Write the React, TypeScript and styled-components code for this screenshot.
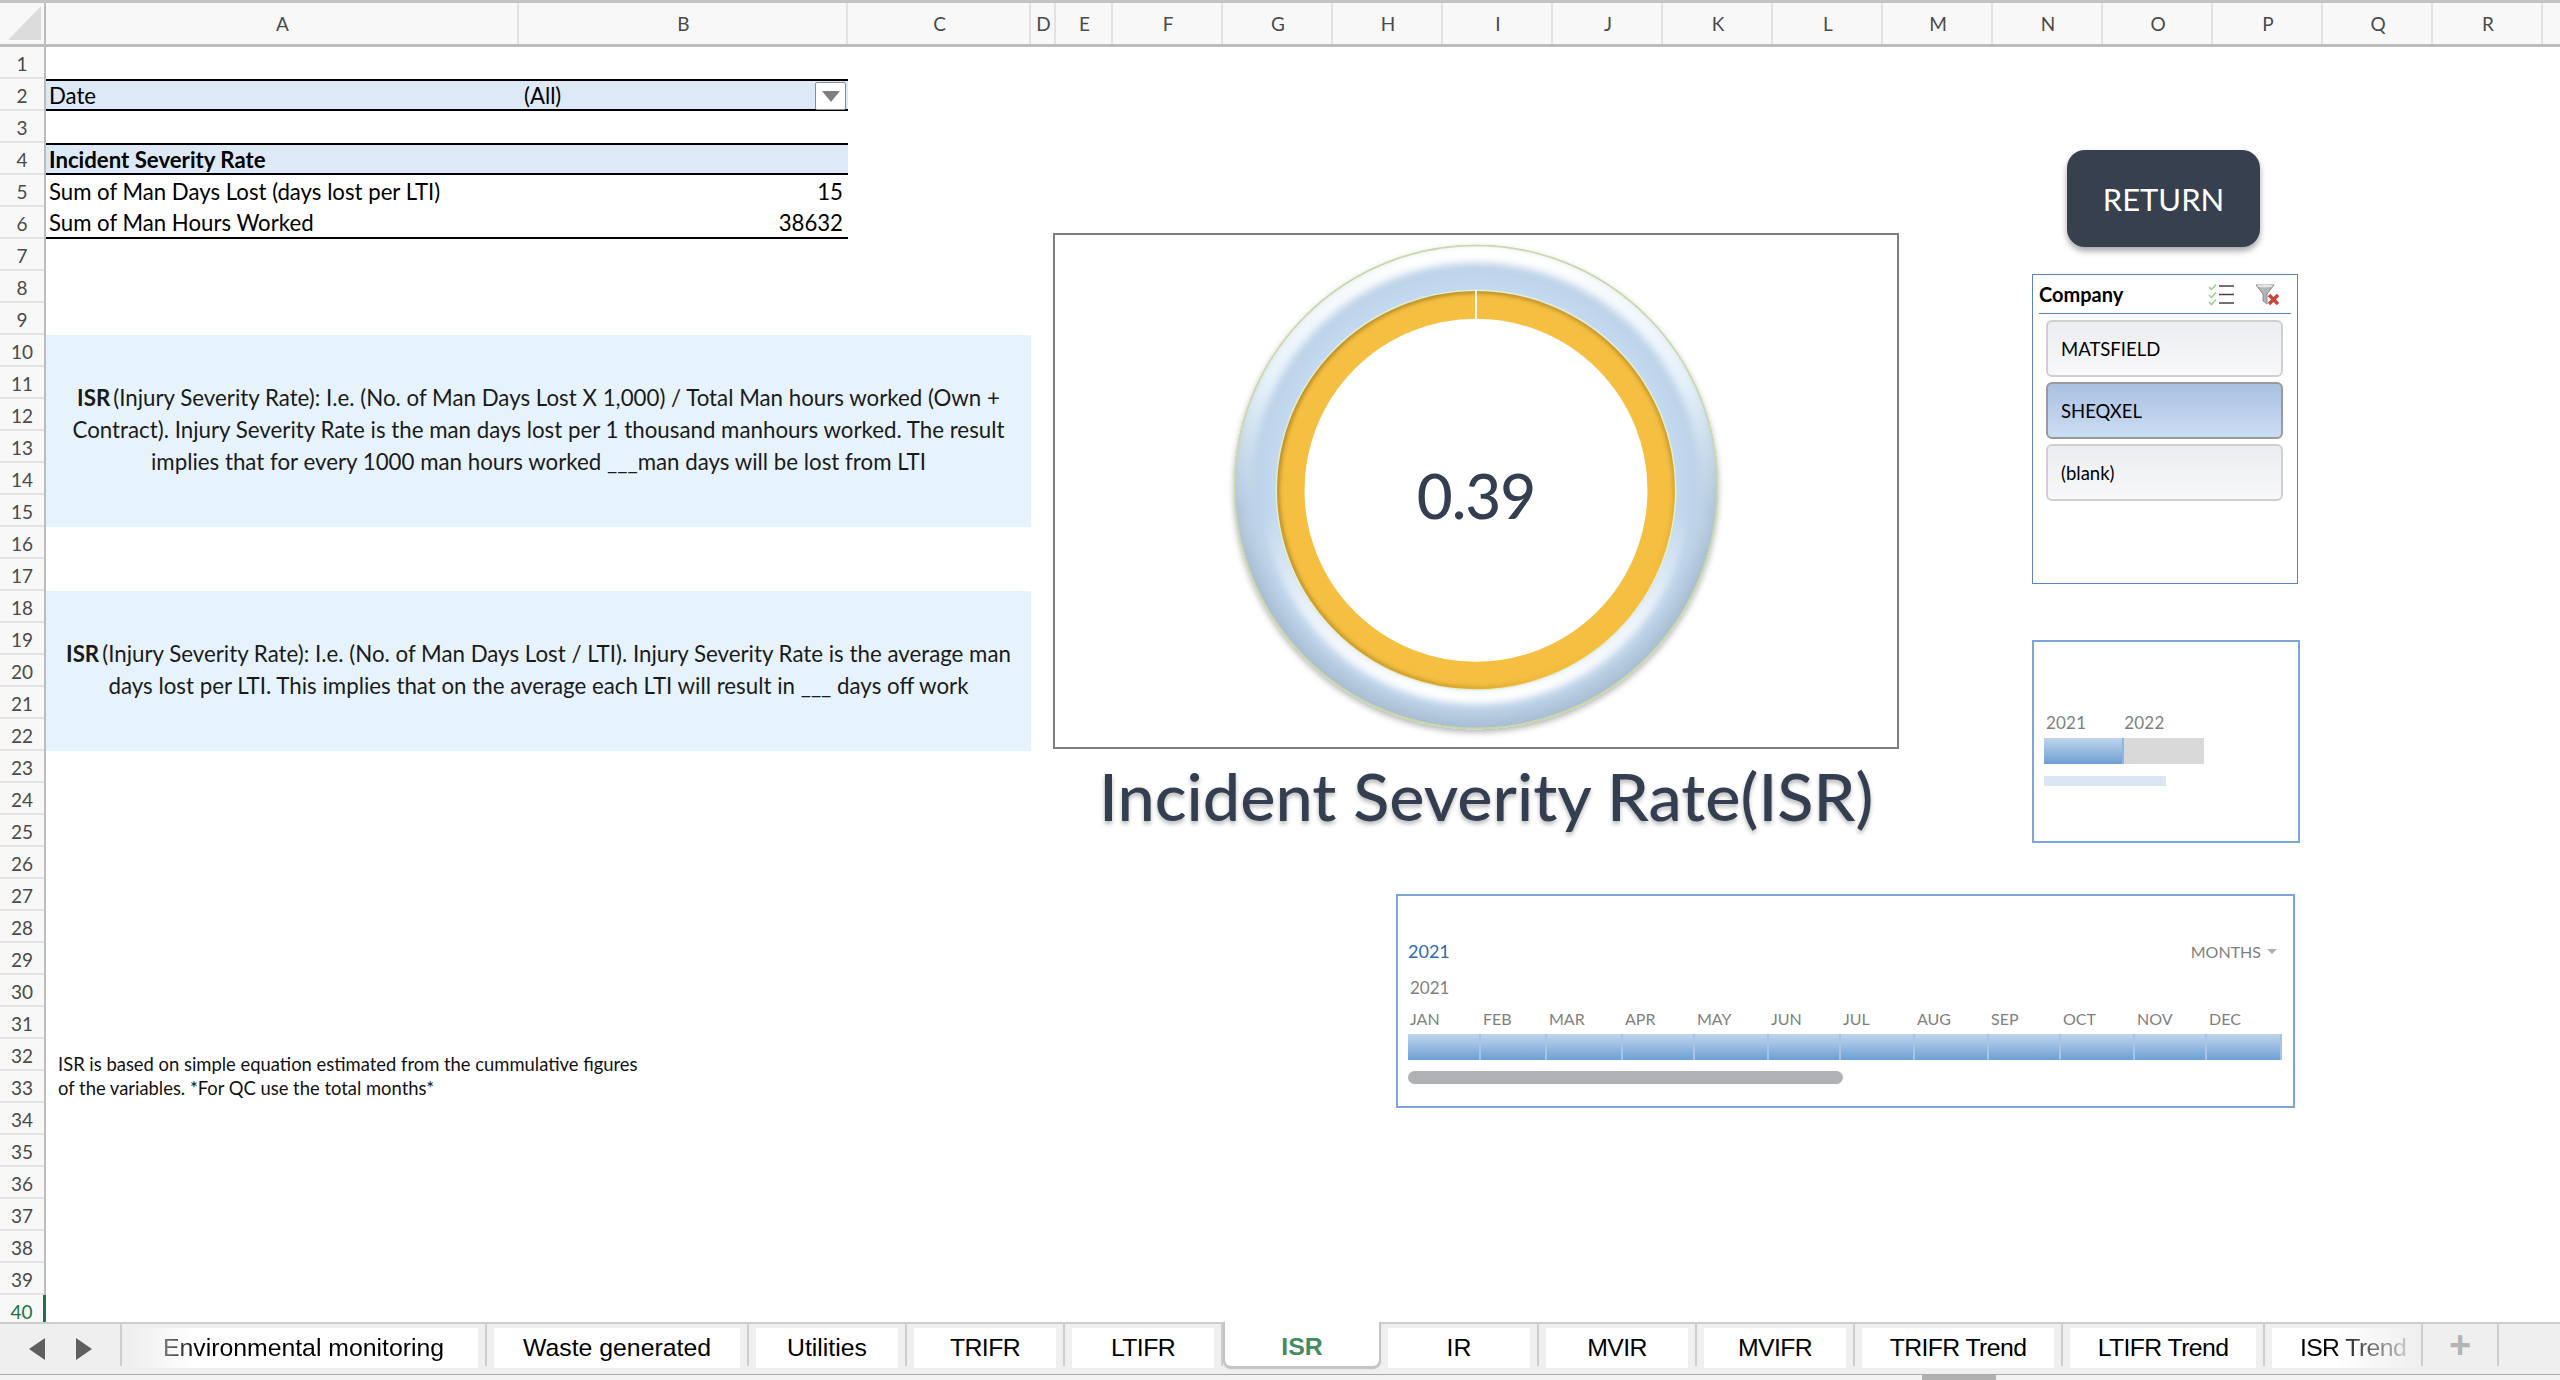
import styled, { createGlobalStyle } from "styled-components";

const calibri = `Lato, "Open Sans", sans-serif`;
const helvetica = `"Liberation Sans", Arial, sans-serif`;

const columns = [
    { name: "A", width: 473 },
    { name: "B", width: 329 },
    { name: "C", width: 183 },
    { name: "D", width: 25 },
    { name: "E", width: 57 },
    { name: "F", width: 110 },
    { name: "G", width: 110 },
    { name: "H", width: 110 },
    { name: "I", width: 110 },
    { name: "J", width: 110 },
    { name: "K", width: 110 },
    { name: "L", width: 110 },
    { name: "M", width: 110 },
    { name: "N", width: 110 },
    { name: "O", width: 110 },
    { name: "P", width: 110 },
    { name: "Q", width: 110 },
    { name: "R", width: 110 },
];

const rows = Array.from({ length: 40 }, (_, i) => i + 1);
const months = ["JAN", "FEB", "MAR", "APR", "MAY", "JUN", "JUL", "AUG", "SEP", "OCT", "NOV", "DEC"];
const sheets = [
    { name: "Utilities" },
    { name: "TRIFR", tight: true },
    { name: "LTIFR", tight: true },
    { name: "ISR", active: true },
    { name: "IR" },
    { name: "MVIR", tight: true },
    { name: "MVIFR", tight: true },
];

const GlobalStyle = createGlobalStyle`
    html, body {
        margin: 0;
        padding: 0;
        background: #ffffff;
        overflow: hidden;
    }
`;

const Page = styled.div`
    width: 2560px;
    height: 1380px;
    display: flex;
    flex-direction: column;
    overflow: hidden;
    background: #ffffff;
    font-family: ${calibri};
    border-top: 3px solid #c4c4c4;
    box-sizing: border-box;
`;

const ColumnBar = styled.div`
    display: flex;
    height: 44px;
    flex: none;
    background: #f8f8f8;
    border-bottom: 3px solid #bdbdbd;
    box-sizing: border-box;
`;

const Corner = styled.div`
    width: 46px;
    flex: none;
    box-sizing: border-box;
    border-right: 2px solid #bdbdbd;
    padding: 3px 3px 4px 8px;
`;

const CornerMark = styled.div`
    width: 100%;
    height: 100%;
    background: #dcdcdc;
    clip-path: polygon(100% 0, 100% 100%, 0 100%);
`;

const ColumnHead = styled.div<{ $width: number }>`
    width: ${(p) => p.$width}px;
    flex: none;
    box-sizing: border-box;
    border-right: 2px solid #e2e2e2;
    padding-left: 2px;
    display: flex;
    align-items: center;
    justify-content: center;
    font-size: 19px;
    color: #4a4a4a;
`;

const SheetArea = styled.div`
    display: flex;
    flex: 1;
    min-height: 0;
    overflow: hidden;
`;

const RowBar = styled.div`
    width: 46px;
    flex: none;
    background: #f8f8f8;
    border-right: 2px solid #bdbdbd;
    box-sizing: border-box;
`;

const RowHead = styled.div<{ $active?: boolean }>`
    height: 32px;
    box-sizing: border-box;
    border-bottom: 2px solid #e2e2e2;
    display: flex;
    align-items: center;
    justify-content: center;
    padding-top: 2px;
    font-size: 19px;
    color: ${(p) => (p.$active ? "#217346" : "#4a4a4a")};
    margin-right: ${(p) => (p.$active ? "-2px" : "0")};
    border-right: ${(p) => (p.$active ? "3px solid #217346" : "none")};
`;

const Sheet = styled.div`
    position: relative;
    flex: 1;
    display: grid;
    grid-template-columns: 473px 329px 183px;
    grid-auto-rows: 32px;
    align-content: start;
`;

const PivotCell = styled.div<{ $row: number; $fill?: boolean; $top?: boolean; $bottom?: boolean; $bold?: boolean }>`
    grid-row: ${(p) => p.$row};
    grid-column: 1 / 3;
    display: flex;
    align-items: center;
    justify-content: space-between;
    box-sizing: border-box;
    padding: 1px 5px 0 3px;
    font-size: 22.2px;
    color: #000000;
    font-weight: ${(p) => (p.$bold ? 700 : 400)};
    background: ${(p) => (p.$fill ? "#dde9f6" : "transparent")};
    border-top: ${(p) => (p.$top ? "2px solid #000" : "none")};
    border-bottom: ${(p) => (p.$bottom ? "2px solid #000" : "none")};
    position: relative;
`;

const PivotValue = styled.span`
    position: absolute;
    left: 478px;
`;

const FilterButton = styled.div`
    position: absolute;
    right: 2px;
    top: 1px;
    width: 31px;
    height: 28px;
    box-sizing: border-box;
    background: #ffffff;
    border: 1px solid #8c8c8c;
    border-radius: 2px;
    display: flex;
    align-items: center;
    justify-content: center;
    &::after {
        content: "";
        border-left: 9px solid transparent;
        border-right: 9px solid transparent;
        border-top: 11px solid #7f7f7f;
    }
`;

const Note = styled.div<{ $rows: string }>`
    grid-row: ${(p) => p.$rows};
    grid-column: 1 / 4;
    background: #e6f3fd;
    display: flex;
    align-items: center;
    justify-content: center;
    text-align: center;
    font-size: 22.3px;
    line-height: 32px;
    color: #1a1a1a;
    padding: 0 10px 3px;
    box-sizing: border-box;
    white-space: nowrap;
`;

const Lead = styled.b`
    margin-right: 3px;
`;

const Footnote = styled.div`
    grid-row: 32 / 34;
    grid-column: 1 / 3;
    font-size: 18.4px;
    line-height: 24px;
    color: #111111;
    padding: 13px 0 0 12px;
    white-space: nowrap;
`;

const GaugeFrame = styled.div`
    position: absolute;
    left: 1007px;
    top: 186px;
    width: 846px;
    height: 516px;
    box-sizing: border-box;
    border: 2px solid #7f7f7f;
    background: #ffffff;
`;

const GaugeSvg = styled.svg`
    display: block;
`;

const GaugeValue = styled.div`
    position: absolute;
    left: 0;
    right: 0;
    top: 224px;
    text-align: center;
    font-size: 62px;
    line-height: 72px;
    letter-spacing: -1px;
    font-weight: 500;
    color: #333f50;
`;

const GaugeTitle = styled.div`
    position: absolute;
    left: 1053px;
    top: 708px;
    font-size: 66.6px;
    line-height: 80px;
    font-weight: 500;
    color: #333f50;
    white-space: nowrap;
    text-shadow: 0 3px 4px rgba(0, 0, 0, 0.28);
`;

const ReturnButton = styled.div`
    position: absolute;
    left: 2021px;
    top: 103px;
    width: 193px;
    height: 97px;
    border-radius: 18px;
    background: #36404f;
    color: #ffffff;
    display: flex;
    align-items: center;
    justify-content: center;
    font-size: 31px;
    box-shadow: 0 4px 6px rgba(0, 0, 0, 0.35);
`;

const Slicer = styled.div`
    position: absolute;
    left: 1986px;
    top: 227px;
    width: 266px;
    height: 310px;
    box-sizing: border-box;
    border: 1px solid #5b84c2;
    background: #ffffff;
    padding: 0 6px;
`;

const SlicerHeader = styled.div`
    height: 38px;
    display: flex;
    align-items: center;
    justify-content: space-between;
    border-bottom: 1px solid #5b84c2;
    font-size: 20px;
    font-weight: 700;
    color: #000000;
`;

const SlicerTools = styled.div`
    display: flex;
    gap: 21px;
    align-items: center;
    padding-right: 12px;
`;

const SlicerItems = styled.div`
    display: flex;
    flex-direction: column;
    gap: 5px;
    padding: 6px 8px 0 7px;
`;

const SlicerItem = styled.div<{ $selected?: boolean }>`
    height: 57px;
    box-sizing: border-box;
    border-radius: 6px;
    padding-left: 13px;
    display: flex;
    align-items: center;
    font-size: 18.5px;
    color: #000000;
    border: 2px solid ${(p) => (p.$selected ? "#9a9a9a" : "#cfcfcf")};
    background: ${(p) =>
        p.$selected ? "linear-gradient(#a9c0e1, #cbddf3)" : "linear-gradient(#ebedf0, #f8f8fa)"};
`;

const TimelineBox = styled.div`
    box-sizing: border-box;
    border: 2px solid #7ca6d8;
    background: #ffffff;
    position: absolute;
`;

const YearBox = styled(TimelineBox)`
    left: 1986px;
    top: 593px;
    width: 268px;
    height: 203px;
    padding: 71px 10px 0;
`;

const YearLabels = styled.div`
    display: flex;
    gap: 38px;
    padding-left: 2px;
    font-size: 17px;
    line-height: 20px;
    color: #7f7f7f;
    letter-spacing: 0.2px;
`;

const BarTrack = styled.div`
    display: flex;
    width: 160px;
    height: 26px;
    margin-top: 5px;
    background: #d9d9d9;
`;

const BarFill = styled.div`
    width: 78px;
    background: linear-gradient(#c0d5ec, #6d9fd3);
    border-right: 2px solid #8fb6e0;
`;

const BarHint = styled.div`
    width: 122px;
    height: 10px;
    margin-top: 12px;
    background: #dae6f2;
`;

const MonthBox = styled(TimelineBox)`
    left: 1350px;
    top: 847px;
    width: 899px;
    height: 214px;
    padding: 0 10px;
`;

const MonthTop = styled.div`
    display: flex;
    justify-content: space-between;
    align-items: center;
    margin-top: 43px;
    height: 24px;
`;

const CurrentYear = styled.div`
    font-size: 18px;
    color: #2e6bb0;
`;

const LevelPicker = styled.div`
    display: flex;
    align-items: center;
    gap: 6px;
    font-size: 16px;
    color: #7f7f7f;
    padding-right: 6px;
    &::after {
        content: "";
        border-left: 5px solid transparent;
        border-right: 5px solid transparent;
        border-top: 5px solid #b0b0b0;
    }
`;

const YearRow = styled.div`
    font-size: 17px;
    color: #7f7f7f;
    margin-top: 14px;
    padding-left: 2px;
    height: 24px;
`;

const MonthGrid = styled.div`
    display: grid;
    grid-template-columns: 73px 66px 76px 72px 74px 72px 74px 74px 72px 74px 72px 75px;
    margin-top: 6px;
`;

const MonthLabel = styled.div`
    font-size: 16px;
    line-height: 24px;
    color: #7f7f7f;
    padding: 0 0 3px 2px;
`;

const MonthBar = styled.div`
    grid-row: 2;
    height: 26px;
    box-sizing: border-box;
    background: linear-gradient(#c0d5ec, #6d9fd3);
    border-right: 2px solid #a6c5e6;
`;

const ScrollThumb = styled.div`
    width: 435px;
    height: 13px;
    border-radius: 7px;
    margin-top: 11px;
    background: #afb1b4;
`;

const TabBar = styled.div`
    height: 54px;
    flex: none;
    display: flex;
    box-sizing: border-box;
    background: #efefef;
    border-top: 2px solid #cdcdcd;
    border-bottom: 2px solid #a9a9a9;
`;

const TabArrows = styled.div`
    width: 122px;
    flex: none;
    display: flex;
    align-items: center;
    gap: 31px;
    padding: 8px 0 0 29px;
    box-sizing: border-box;
    height: 42px;
    border-right: 2px solid #cdcdcd;
`;

const Arrow = styled.div<{ $right?: boolean }>`
    width: 0;
    height: 0;
    border-top: 11px solid transparent;
    border-bottom: 11px solid transparent;
    ${(p) => (p.$right ? "border-left: 16px solid #5f5f5f;" : "border-right: 16px solid #5f5f5f;")}
`;

const Tab = styled.div<{ $width: number }>`
    width: ${(p) => p.$width}px;
    flex: none;
    box-sizing: border-box;
    height: 42px;
    border-right: 2px solid #cdcdcd;
    padding: 4px 7px 0 7px;
`;

const ActiveTab = styled.div<{ $width: number }>`
    width: ${(p) => p.$width}px;
    flex: none;
    box-sizing: border-box;
    height: 46px;
    margin-top: -2px;
    padding-top: 7px;
    background: #ffffff;
    border: 2px solid #c4c4c4;
    border-top: none;
    border-radius: 0 0 8px 8px;
    box-shadow: 0 1px 1px rgba(0, 0, 0, 0.2);
`;

const TabFace = styled.div<{ $tight?: boolean }>`
    height: 40px;
    background: #ffffff;
    display: flex;
    align-items: center;
    justify-content: center;
    font-family: ${helvetica};
    font-size: 24.8px;
    letter-spacing: ${(p) => (p.$tight ? "-0.6px" : "0")};
    color: #000000;
    white-space: nowrap;
`;

const ActiveFace = styled(TabFace)`
    height: 36px;
    background: transparent;
    color: #468a60;
    font-weight: 700;
`;

const FadedFace = styled(TabFace)<{ $fromRight?: boolean }>`
    overflow: hidden;
    ${(p) => (p.$fromRight ? "margin-right: -7px; padding-left: 13px;" : "")}
    -webkit-mask-image: linear-gradient(
        ${(p) => (p.$fromRight ? "to left" : "to right")},
        rgba(0, 0, 0, 0),
        #000 ${(p) => (p.$fromRight ? "90px" : "70px")}
    );
`;

const AddTab = styled.div`
    width: 76px;
    height: 42px;
    flex: none;
    box-sizing: border-box;
    border-right: 2px solid #cdcdcd;
    display: flex;
    align-items: center;
    justify-content: center;
    font-family: ${helvetica};
    font-size: 38px;
    font-weight: 700;
    color: #b4b4b4;
`;

const TabScroll = styled.div`
    height: 5px;
    flex: none;
    background: #f3f3f3;
    display: flex;
    padding-left: 1922px;
    margin-top: -1px;
`;

const TabScrollThumb = styled.div`
    width: 74px;
    background: #b0b0b0;
`;

const GaugeIcon = () => (
    <GaugeSvg width="842" height="512" viewBox="0 0 842 512">
        <defs>
            <linearGradient id="rimTop" x1="0" y1="0" x2="0" y2="1">
                <stop offset="0" stopColor="#ffffff" stopOpacity="1" />
                <stop offset="0.28" stopColor="#eef8ff" stopOpacity="0.85" />
                <stop offset="0.55" stopColor="#dcecfb" stopOpacity="0.15" />
                <stop offset="0.7" stopColor="#dcecfb" stopOpacity="0" />
            </linearGradient>
            <linearGradient id="rimBottom" x1="0" y1="0" x2="0" y2="1">
                <stop offset="0.55" stopColor="#ffffff" stopOpacity="0" />
                <stop offset="0.8" stopColor="#ffffff" stopOpacity="0.7" />
                <stop offset="1" stopColor="#ffffff" stopOpacity="1" />
            </linearGradient>
            <radialGradient id="ringBase" gradientUnits="userSpaceOnUse" cx="421" cy="252" r="241.5">
                <stop offset="0.83" stopColor="#c3d9ef" />
                <stop offset="0.92" stopColor="#bcd2e8" />
                <stop offset="1" stopColor="#a8bdd1" />
            </radialGradient>
            <linearGradient id="yellowEdge" x1="0" y1="0" x2="1" y2="1">
                <stop offset="0.1" stopColor="#7a5a10" stopOpacity="0.7" />
                <stop offset="0.7" stopColor="#7a5a10" stopOpacity="0.45" />
                <stop offset="0.85" stopColor="#7a5a10" stopOpacity="0" />
            </linearGradient>
            <filter id="soft" x="-20%" y="-20%" width="140%" height="140%">
                <feGaussianBlur stdDeviation="3.5" />
            </filter>
            <filter id="softer" x="-20%" y="-20%" width="140%" height="140%">
                <feGaussianBlur stdDeviation="2" />
            </filter>
            <filter id="drop" x="-10%" y="-10%" width="120%" height="120%">
                <feDropShadow dx="0" dy="3" stdDeviation="3" floodColor="#000" floodOpacity="0.3" />
            </filter>
            <clipPath id="ringClip">
                <path
                    clipRule="evenodd"
                    d="M179.5 252a241.5 241.5 0 1 0 483 0a241.5 241.5 0 1 0 -483 0z M222 255a199 199 0 1 0 398 0a199 199 0 1 0 -398 0z"
                />
            </clipPath>
            <clipPath id="yellowClip">
                <path
                    clipRule="evenodd"
                    d="M222 255a199 199 0 1 0 398 0a199 199 0 1 0 -398 0z M249.5 255.5a171.5 171.5 0 1 0 343 0a171.5 171.5 0 1 0 -343 0z"
                />
            </clipPath>
        </defs>
        <circle cx="421" cy="252" r="241.5" fill="url(#ringBase)" stroke="#c8d8a8" strokeWidth="1.5" filter="url(#drop)" />
        <g clipPath="url(#ringClip)">
            <circle cx="421" cy="252" r="234" fill="none" stroke="url(#rimTop)" strokeWidth="20" filter="url(#soft)" />
            <circle cx="421" cy="255" r="206" fill="none" stroke="url(#rimBottom)" strokeWidth="16" filter="url(#soft)" />
        </g>
        <circle cx="421" cy="252" r="241.5" fill="none" stroke="#c8d8a8" strokeWidth="1.5" />
        <circle cx="421" cy="255" r="199.5" fill="#ffffff" stroke="#e4efd0" strokeWidth="2" />
        <circle cx="421" cy="255.25" r="185.25" fill="none" stroke="#f5bf41" strokeWidth="27.5" />
        <g clipPath="url(#yellowClip)">
            <circle cx="421" cy="255" r="199" fill="none" stroke="url(#yellowEdge)" strokeWidth="4" filter="url(#softer)" />
        </g>
        <rect x="420" y="55" width="2" height="30" fill="#f4f6f8" />
    </GaugeSvg>
);

const ChecklistIcon = () => (
    <svg width="26" height="23" viewBox="0 0 26 23">
        <path d="M1 4l2.5 2.5L8 1.5M1 12l2.5 2.5L8 9.5M1 19l2.5 2.5L8 16.5" fill="none" stroke="#9fd28f" strokeWidth="1.6" />
        <path d="M11 3h15M11 11.5h15M11 20h15" fill="none" stroke="#444" strokeWidth="1.5" />
    </svg>
);

const ClearFilterIcon = () => (
    <svg width="24" height="23" viewBox="0 0 24 23">
        <path d="M1 2h18l-7 9v10l-4-3v-7z" fill="#b4b4b4" stroke="#8b8b8b" strokeWidth="1" />
        <ellipse cx="10" cy="3" rx="8" ry="1.5" fill="#e4e4e4" />
        <path d="M14 12l9 9M23 12l-9 9" stroke="#c8453e" strokeWidth="3.4" />
    </svg>
);

export default function App() {
    return (
        <Page>
            <GlobalStyle />
            <ColumnBar>
                <Corner>
                    <CornerMark />
                </Corner>
                {columns.map((c) => (
                    <ColumnHead key={c.name} $width={c.width}>
                        {c.name}
                    </ColumnHead>
                ))}
            </ColumnBar>
            <SheetArea>
                <RowBar>
                    {rows.map((r) => (
                        <RowHead key={r} $active={r === 40}>
                            {r}
                        </RowHead>
                    ))}
                </RowBar>
                <Sheet>
                    <PivotCell $row={2} $fill $top $bottom>
                        Date
                        <PivotValue>(All)</PivotValue>
                        <FilterButton />
                    </PivotCell>
                    <PivotCell $row={4} $fill $top $bottom $bold>
                        Incident Severity Rate
                    </PivotCell>
                    <PivotCell $row={5}>
                        Sum of Man Days Lost (days lost per LTI)
                        <span>15</span>
                    </PivotCell>
                    <PivotCell $row={6} $bottom>
                        Sum of Man Hours Worked
                        <span>38632</span>
                    </PivotCell>

                    <Note $rows="10 / 16">
                        <div>
                            <Lead>ISR</Lead>(Injury Severity Rate): I.e. (No. of Man Days Lost X 1,000) / Total Man hours worked (Own +
                            <br />
                            Contract). Injury Severity Rate is the man days lost per 1 thousand manhours worked. The result
                            <br />
                            implies that for every 1000 man hours worked ___man days will be lost from LTI
                        </div>
                    </Note>
                    <Note $rows="18 / 23">
                        <div>
                            <Lead>ISR</Lead>(Injury Severity Rate): I.e. (No. of Man Days Lost / LTI). Injury Severity Rate is the average man
                            <br />
                            days lost per LTI. This implies that on the average each LTI will result in ___ days off work
                        </div>
                    </Note>
                    <Footnote>
                        ISR is based on simple equation estimated from the cummulative figures
                        <br />
                        of the variables. *For QC use the total months*
                    </Footnote>

                    <GaugeFrame>
                        <GaugeIcon />
                        <GaugeValue>0.39</GaugeValue>
                    </GaugeFrame>
                    <GaugeTitle>Incident Severity Rate(ISR)</GaugeTitle>

                    <ReturnButton>RETURN</ReturnButton>

                    <Slicer>
                        <SlicerHeader>
                            Company
                            <SlicerTools>
                                <ChecklistIcon />
                                <ClearFilterIcon />
                            </SlicerTools>
                        </SlicerHeader>
                        <SlicerItems>
                            <SlicerItem>MATSFIELD</SlicerItem>
                            <SlicerItem $selected>SHEQXEL</SlicerItem>
                            <SlicerItem>(blank)</SlicerItem>
                        </SlicerItems>
                    </Slicer>

                    <YearBox>
                        <YearLabels>
                            <span>2021</span>
                            <span>2022</span>
                        </YearLabels>
                        <BarTrack>
                            <BarFill />
                        </BarTrack>
                        <BarHint />
                    </YearBox>

                    <MonthBox>
                        <MonthTop>
                            <CurrentYear>2021</CurrentYear>
                            <LevelPicker>MONTHS</LevelPicker>
                        </MonthTop>
                        <YearRow>2021</YearRow>
                        <MonthGrid>
                            {months.map((m) => (
                                <MonthLabel key={m}>{m}</MonthLabel>
                            ))}
                            {months.map((m) => (
                                <MonthBar key={m} />
                            ))}
                        </MonthGrid>
                        <ScrollThumb />
                    </MonthBox>
                </Sheet>
            </SheetArea>
            <TabBar>
                <TabArrows>
                    <Arrow />
                    <Arrow $right />
                </TabArrows>
                <Tab $width={365}>
                    <FadedFace>Environmental monitoring</FadedFace>
                </Tab>
                <Tab $width={262}>
                    <TabFace>Waste generated</TabFace>
                </Tab>
                {sheets.map((s) =>
                    s.active ? (
                        <ActiveTab key={s.name} $width={158}>
                            <ActiveFace>{s.name}</ActiveFace>
                        </ActiveTab>
                    ) : (
                        <Tab key={s.name} $width={158}>
                            <TabFace $tight={s.tight}>{s.name}</TabFace>
                        </Tab>
                    )
                )}
                <Tab $width={208}>
                    <TabFace $tight>TRIFR Trend</TabFace>
                </Tab>
                <Tab $width={202}>
                    <TabFace $tight>LTIFR Trend</TabFace>
                </Tab>
                <Tab $width={158}>
                    <FadedFace $tight $fromRight>ISR Trend</FadedFace>
                </Tab>
                <AddTab>+</AddTab>
            </TabBar>
            <TabScroll>
                <TabScrollThumb />
            </TabScroll>
        </Page>
    );
}
